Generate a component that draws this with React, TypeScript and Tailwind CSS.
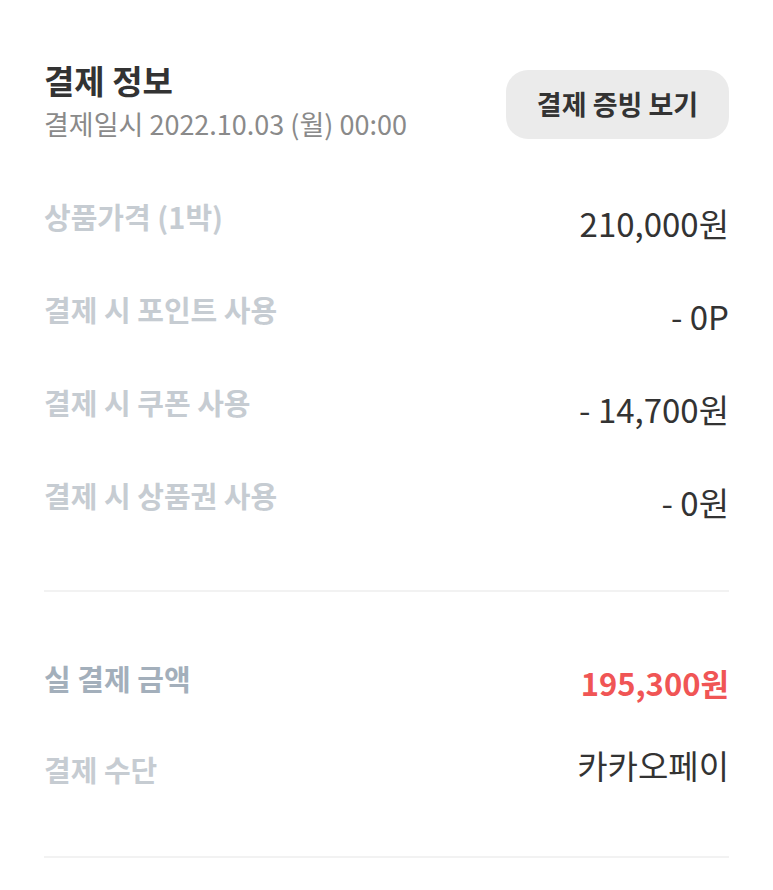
const font = { fontFamily: '"Noto Sans CJK KR", "Noto Sans", sans-serif' };

const rows = [
  { label: "상품가격 (1박)", value: "210,000원" },
  { label: "결제 시 포인트 사용", value: "- 0P" },
  { label: "결제 시 쿠폰 사용", value: "- 14,700원" },
  { label: "결제 시 상품권 사용", value: "- 0원" },
];

export default function App() {
  return (
    <div className="min-h-[890px] bg-white px-[44px] pt-[60px]" style={font}>
      {/* Header */}
      <div className="flex items-start justify-between">
        <div>
          <h2 className="text-[33px] font-bold leading-[40px] text-[#333]">결제 정보</h2>
          <p className="mt-[4px] text-[27px] leading-[40px] text-[#8a8a8a]">
            결제일시 2022.10.03 (월) 00:00
          </p>
        </div>
        <button className="mt-[10px] h-[69px] w-[223px] rounded-[22px] bg-[#ebebeb] text-[27px] font-bold text-[#333]">
          결제 증빙 보기
        </button>
      </div>

      {/* Price rows */}
      <div className="mt-[52px] flex flex-col gap-[46px]">
        {rows.map((r) => (
          <div key={r.label} className="flex items-start justify-between">
            <span className="text-[29px] font-bold leading-[40px] text-[#c6ccd2]">{r.label}</span>
            <span className="mt-[7px] text-[33px] leading-[40px] text-[#333]">{r.value}</span>
          </div>
        ))}
      </div>

      <div className="mt-[68px] h-[2px] bg-[#f2f2f2]" />

      <div className="mt-[66px] flex items-start justify-between">
        <span className="text-[29px] font-bold leading-[40px] text-[#a3afbb]">실 결제 금액</span>
        <span className="mt-[5px] text-[31px] font-bold leading-[40px] text-[#f05555]">195,300원</span>
      </div>
      <div className="mt-[42px] flex items-start justify-between">
        <span className="mt-[4px] text-[29px] font-bold leading-[40px] text-[#c6ccd2]">결제 수단</span>
        <span className="text-[33px] leading-[40px] text-[#333]">카카오페이</span>
      </div>

      <div className="mt-[67px] h-[2px] bg-[#f2f2f2]" />
    </div>
  );
}
